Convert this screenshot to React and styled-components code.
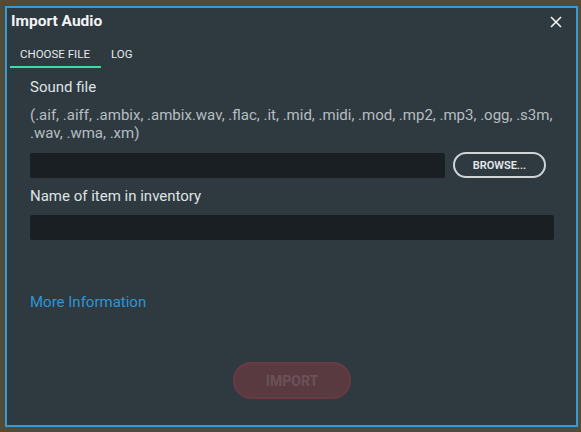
import React, {useState} from 'react';
import styled, {createGlobalStyle, css} from 'styled-components';

const GlobalStyle = createGlobalStyle`
  html, body {
    margin: 0;
    padding: 0;
    background: #514b37;
    width: 581px;
    height: 432px;
    overflow: hidden;
  }
  body {
    font-family: Roboto, "Noto Sans", sans-serif;
  }
`

const Page = styled.div`
  padding: 6px 3px 5px 5px;
`

const Window = styled.div`
  box-sizing: border-box;
  width: 573px;
  height: 421px;
  border: 2px solid #379ad8;
  background: #2e3940;
  display: flex;
  flex-direction: column;
`

const TitleBar = styled.div`
  display: flex;
  align-items: center;
  justify-content: space-between;
  height: 26px;
  padding: 0 14px 0 4px;
`

const Title = styled.div`
  color: #f2f4f5;
  font-size: 15.5px;
  font-weight: 700;
`

const CloseButton = styled.button`
  border: none;
  background: transparent;
  padding: 0;
  width: 12px;
  height: 12px;
  display: flex;
  cursor: pointer;
  margin-top: 2px;
`

const Tabs = styled.div`
  display: flex;
  margin: 9px 0 0 3px;
`

const Tab = styled.button`
  border: none;
  background: transparent;
  color: #e6e9eb;
  font-family: inherit;
  font-size: 11.5px;
  padding: 4px 10px 5px;
  border-bottom: 2px solid transparent;
  cursor: pointer;

  ${props => props.active && css`
    border-bottom-color: #3fdca0;
    padding-right: 11px;
  `}
`

const Body = styled.div`
  flex: 1;
  display: flex;
  flex-direction: column;
  padding: 10px 22px 0 23px;
`

const Label = styled.div`
  color: #dfe3e5;
  font-size: 15px;
  line-height: 18px;
  margin-top: ${props => props.top || 0}px;
`

const Hint = styled.div`
  color: #b7bec2;
  font-size: 15px;
  line-height: 18px;
  margin-top: 10px;
`

const Row = styled.div`
  display: flex;
  align-items: center;
  gap: 8px;
  margin-top: ${props => props.top || 0}px;
  padding-right: ${props => props.inset || 0}px;
`

const Field = styled.input`
  box-sizing: border-box;
  flex: 1;
  height: 25px;
  border: none;
  border-radius: 2px;
  background: #1a1f23;
  color: #e6e9eb;
  outline: none;
`

const BrowseButton = styled.button`
  box-sizing: border-box;
  width: 93px;
  height: 26px;
  border: 2px solid #cfd4d6;
  border-radius: 13px;
  background: transparent;
  color: #e6e9eb;
  font-family: inherit;
  font-weight: 600;
  font-size: 11px;
  cursor: pointer;
`

const InfoLink = styled.a`
  color: #2f95d3;
  font-size: 15px;
  margin-top: 53px;
  text-decoration: none;
  cursor: pointer;
`

const Footer = styled.div`
  display: flex;
  justify-content: center;
  margin-top: 51px;
`

const ImportButton = styled.button`
  box-sizing: border-box;
  width: 118px;
  height: 37px;
  border: 2px solid #683b44;
  border-radius: 18px;
  background: #5a3a41;
  color: #6c5158;
  font-family: inherit;
  font-weight: 700;
  font-size: 14px;
  cursor: default;
`

const App = () => {
    const [tab, setTab] = useState('file')

    return (
        <Page>
            <GlobalStyle/>
            <Window>
                <TitleBar>
                    <Title>Import Audio</Title>
                    <CloseButton>
                        <svg width="12" height="12" viewBox="0 0 12 12">
                            <path d="M1 1 L11 11 M11 1 L1 11" stroke="#f2f4f5" strokeWidth="1.6"/>
                        </svg>
                    </CloseButton>
                </TitleBar>
                <Tabs>
                    <Tab active={tab === 'file'} onClick={() => setTab('file')}>CHOOSE FILE</Tab>
                    <Tab active={tab === 'log'} onClick={() => setTab('log')}>LOG</Tab>
                </Tabs>
                <Body>
                    <Label>Sound file</Label>
                    <Hint>(.aif, .aiff, .ambix, .ambix.wav, .flac, .it, .mid, .midi, .mod, .mp2, .mp3, .ogg, .s3m, .wav, .wma, .xm)</Hint>
                    <Row top={10} inset={8}>
                        <Field/>
                        <BrowseButton>BROWSE...</BrowseButton>
                    </Row>
                    <Label top={9}>Name of item in inventory</Label>
                    <Row top={10}>
                        <Field/>
                    </Row>
                    <InfoLink>More Information</InfoLink>
                    <Footer>
                        <ImportButton disabled>IMPORT</ImportButton>
                    </Footer>
                </Body>
            </Window>
        </Page>
    );
};

export default App;
